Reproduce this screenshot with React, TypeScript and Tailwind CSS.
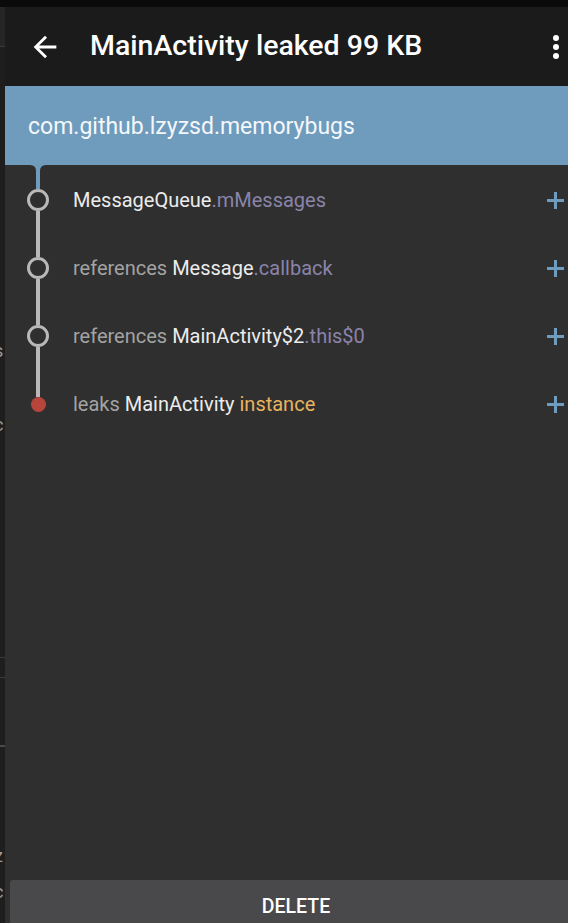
import React from "react";

const FONT = { fontFamily: "Roboto, 'Noto Sans', sans-serif" };

type Part = { t: string; c: string };
const rows: { parts: Part[]; leak?: boolean }[] = [
  { parts: [{ t: "MessageQueue", c: "text-[#ececec]" }, { t: ".mMessages", c: "text-[#8a84aa]" }] },
  {
    parts: [
      { t: "references ", c: "text-[#a3a3a3]" },
      { t: "Message", c: "text-[#ececec]" },
      { t: ".callback", c: "text-[#8a84aa]" },
    ],
  },
  {
    parts: [
      { t: "references ", c: "text-[#a3a3a3]" },
      { t: "MainActivity$2", c: "text-[#ececec]" },
      { t: ".this$0", c: "text-[#8a84aa]" },
    ],
  },
  {
    parts: [
      { t: "leaks ", c: "text-[#a3a3a3]" },
      { t: "MainActivity ", c: "text-[#ececec]" },
      { t: "instance", c: "text-[#e8b35e]" },
    ],
    leak: true,
  },
];

function Plus() {
  return (
    <svg width="17" height="17" viewBox="0 0 17 17">
      <rect x="7" y="0" width="3" height="17" fill="#6f9bbd" />
      <rect x="0" y="7" width="17" height="3" fill="#6f9bbd" />
    </svg>
  );
}

export default function App() {
  return (
    <div className="w-[568px] h-[923px] flex flex-col bg-[#2f2f2f] overflow-hidden" style={FONT}>
      <div className="h-[7px] bg-[#0a0a0a] shrink-0" />
      <div className="flex flex-1 min-h-0">
        {/* background window sliver */}
        <div className="w-[5px] shrink-0 bg-[#1e1e1e] flex flex-col overflow-hidden text-[#9a9a9a] text-[18px] leading-none">
          <div className="h-[40px] bg-[#262626] border-b border-[#3a3a3a]" />
          <div className="h-[295px]" />
          <div className="-ml-[6px]">s</div>
          <div className="h-[56px]" />
          <div className="-ml-[6px]">c</div>
          <div className="h-[223px]" />
          <div className="h-[21px] border-t border-b border-[#3a3a3a]" />
          <div className="h-[32px]" />
          <div className="h-[37px] border-b-2 border-[#4a4a4a]" />
          <div className="h-[100px]" />
          <div className="-ml-[6px]">z</div>
          <div className="h-[18px]" />
          <div className="-ml-[6px]">c</div>
        </div>

        <div className="flex-1 flex flex-col min-w-0">
          {/* App bar */}
          <div className="h-[79px] shrink-0 bg-[#1b1b1b] flex items-center">
            <svg width="34" height="34" viewBox="0 0 24 24" className="ml-[23px]">
              <path fill="#ffffff" d="M20 11H7.83l5.59-5.59L12 4l-8 8 8 8 1.41-1.41L7.83 13H20v-2z" />
            </svg>
            <div className="ml-[28px] text-[28.5px] font-medium text-white flex-1 whitespace-nowrap">
              MainActivity leaked 99 KB
            </div>
            <div className="flex flex-col gap-[3px] mr-[9px] mt-[1px]">
              <div className="w-[6px] h-[6px] rounded-full bg-white" />
              <div className="w-[6px] h-[6px] rounded-full bg-white" />
              <div className="w-[6px] h-[6px] rounded-full bg-white" />
            </div>
          </div>

          {/* Header */}
          <div className="h-[79px] shrink-0 bg-[#6f9bbd] flex items-center pl-[23px] pt-[3px]">
            <span className="text-[23px] text-[#f4f7fa]">com.github.lzyzsd.memorybugs</span>
          </div>

          {/* Trace */}
          <div className="flex-1 flex flex-col">
            <div className="h-[1px]" />
            {rows.map((r, i) => (
              <div key={i} className="h-[68px] flex items-center">
                <div className="w-[66px] h-full flex flex-col items-center shrink-0">
                  {i === 0 ? (
                    <div className="flex-1 flex flex-col items-center">
                      <svg width="16" height="7" viewBox="0 0 16 7" className="-mt-[1px]">
                        <path d="M0 0 Q6 0 6 6 V7 H10 V6 Q10 0 16 0 Z" fill="#6f9bbd" />
                      </svg>
                      <div className="flex-1 w-[4px] bg-[#6f9bbd]" />
                    </div>
                  ) : (
                    <div className="flex-1 w-[4px] bg-[#b9b9b9]" />
                  )}
                  {r.leak ? (
                    <div className="w-[15px] h-[15px] rounded-full bg-[#b8453c] shrink-0" />
                  ) : (
                    <div className="w-[22px] h-[22px] rounded-full border-[3.5px] border-[#b9b9b9] shrink-0" />
                  )}
                  <div className={"flex-1 w-[4px] " + (i === rows.length - 1 ? "" : "bg-[#b9b9b9]")} />
                </div>
                <div className="flex-1 pl-[2px] text-[20px] whitespace-pre">
                  {r.parts.map((p, j) => (
                    <span key={j} className={p.c}>
                      {p.t}
                    </span>
                  ))}
                </div>
                <div className="pr-[4px] flex items-center">
                  <Plus />
                </div>
              </div>
            ))}
          </div>

          {/* Delete button */}
          <div className="h-[43px] shrink-0 ml-[5px] rounded-tl-[3px] bg-[#49494b] flex items-start justify-center pt-[15px] pl-[14px]">
            <span className="text-[19.5px] font-medium text-white leading-[24px]">DELETE</span>
          </div>
        </div>
      </div>
    </div>
  );
}
